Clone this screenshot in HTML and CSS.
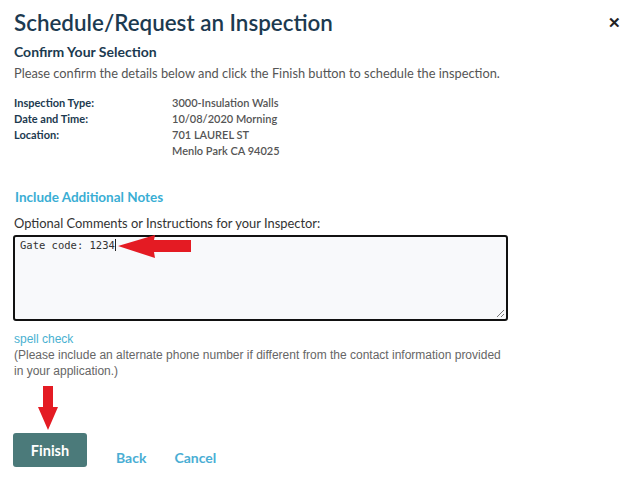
FILE: index.html
```html
<!DOCTYPE html>
<html>
<head>
<meta charset="utf-8">
<link rel="stylesheet" href="styles.css">
</head>
<body>
<div class="dialog">
  <div class="header">
    <h1 class="title">Schedule/Request an Inspection</h1>
    <span class="close">&#x2715;</span>
  </div>
  <h2 class="subtitle">Confirm Your Selection</h2>
  <p class="intro">Please confirm the details below and click the Finish button to schedule the inspection.</p>
  <div class="details">
    <div class="label">Inspection Type:</div><div class="value">3000-Insulation Walls</div>
    <div class="label">Date and Time:</div><div class="value">10/08/2020 Morning</div>
    <div class="label">Location:</div><div class="value">701 LAUREL ST<br>Menlo Park CA 94025</div>
  </div>
  <h3 class="notes-title">Include Additional Notes</h3>
  <label class="notes-label">Optional Comments or Instructions for your Inspector:</label>
  <div class="textarea-wrap">
    <div class="textarea">Gate code: 1234<span class="caret"></span></div>
    <svg class="grip" width="9" height="9" viewBox="0 0 9 9"><path d="M8 1 L1 8 M8 5 L5 8" stroke="#777" stroke-width="1"/></svg>
    <svg class="arrow-left" width="74" height="24" viewBox="0 0 74 24"><polygon points="0,11 37,0 36,5 73,5 73,17 36,17 37,23" fill="#e41b23"/></svg>
  </div>
  <a class="spell">spell check</a>
  <p class="hint">(Please include an alternate phone number if different from the contact information provided in your application.)</p>
  <div class="actions">
    <div class="finish-col">
      <svg class="arrow-down" width="22" height="44" viewBox="0 0 22 44"><polygon points="6,0 16,0 16,21 21,21 11,44 1,21 6,21" fill="#e41b23"/></svg>
      <button class="finish">Finish</button>
    </div>
    <a class="link">Back</a>
    <a class="link">Cancel</a>
  </div>
</div>
</body>
</html>
```

FILE: styles.css
```css
html, body {
  margin: 0;
  padding: 0;
  background: #fff;
}
.dialog {
  padding: 9px 14px 0 14px;
  font-family: Lato, "Open Sans", sans-serif;
  color: #555;
}
.header {
  display: flex;
  justify-content: space-between;
  align-items: flex-start;
}
.title {
  margin: 0;
  font-size: 22.4px;
  font-weight: 600;
  color: #1c3a50;
  line-height: 28px;
}
.close {
  font-size: 15px;
  font-weight: bold;
  color: #222;
  margin-top: 4px;
  margin-right: -1px;
}
.subtitle {
  margin: 6px 0 0 0;
  font-size: 14px;
  font-weight: bold;
  color: #1c3a50;
  line-height: 18px;
}
.intro {
  margin: 3px 0 0 0;
  font-size: 12.8px;
  line-height: 18px;
  color: #555;
}
.details {
  display: grid;
  grid-template-columns: 158px auto;
  margin-top: 13px;
  font-size: 11px;
  line-height: 16px;
}
.label {
  font-weight: bold;
  color: #1c3a50;
}
.value {
  color: #555;
  font-weight: 600;
}
.notes-title {
  margin: 29px 0 0 1px;
  font-size: 13.5px;
  font-weight: bold;
  color: #3aaed4;
  line-height: 18px;
}
.notes-label {
  display: block;
  margin-top: 9px;
  font-size: 12.9px;
  color: #333;
  line-height: 16px;
}
.textarea-wrap {
  position: relative;
  margin-top: 4px;
  margin-left: -1px;
  width: 495px;
}
.textarea {
  box-sizing: border-box;
  width: 495px;
  height: 86px;
  border: 2px solid #111;
  border-radius: 3px;
  background: #f8f9fb;
  padding: 1px 5px;
  font-family: "DejaVu Sans Mono", monospace;
  font-size: 10.5px;
  line-height: 15px;
  color: #333;
}
.caret {
  display: inline-block;
  width: 1px;
  height: 12px;
  background: #222;
  vertical-align: -2px;
}
.grip {
  position: absolute;
  right: 3px;
  bottom: 3px;
}
.arrow-left {
  position: absolute;
  left: 105px;
  top: 0;
}
.spell {
  display: block;
  margin-top: 10px;
  font-family: "Liberation Sans", Arial, sans-serif;
  font-size: 12px;
  color: #49b1d1;
  line-height: 16px;
}
.hint {
  margin: 0;
  width: 494px;
  font-family: "Liberation Sans", Arial, sans-serif;
  font-size: 12px;
  color: #666;
  line-height: 16px;
}
.actions {
  display: flex;
  align-items: flex-end;
  margin-top: 7px;
}
.finish-col {
  display: flex;
  flex-direction: column;
  align-items: flex-start;
}
.arrow-down {
  margin-left: 23px;
  margin-bottom: 3px;
}
.finish {
  margin-left: -1px;
  width: 74px;
  height: 34px;
  border: none;
  border-radius: 3px;
  background: #4b7a7a;
  color: #fff;
  font-family: Lato, sans-serif;
  font-weight: bold;
  font-size: 14.5px;
  padding: 0;
}
.link {
  font-size: 14px;
  font-weight: bold;
  color: #4aaed4;
  line-height: 18px;
  margin-bottom: 0;
}
.finish-col + .link {
  margin-left: 29px;
}
.link + .link {
  margin-left: 28px;
}
```
